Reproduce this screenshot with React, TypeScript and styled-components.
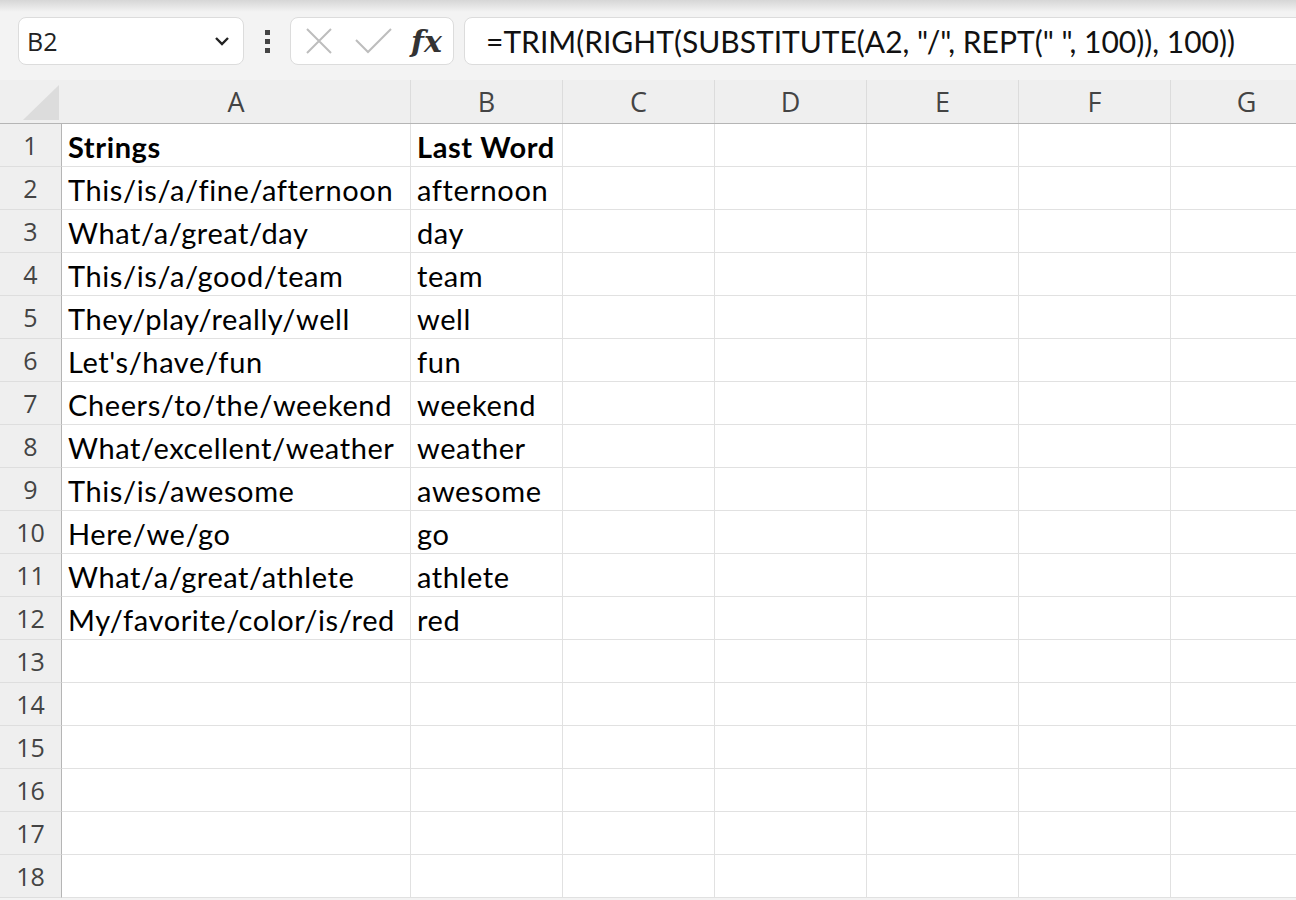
import styled, { createGlobalStyle } from 'styled-components'

const GlobalStyle = createGlobalStyle`
  html, body {
    margin: 0;
    padding: 0;
    background: #f3f3f3;
    overflow: hidden;
  }
`

const columns = [
  { name: 'A', width: 349 },
  { name: 'B', width: 152 },
  { name: 'C', width: 152 },
  { name: 'D', width: 152 },
  { name: 'E', width: 152 },
  { name: 'F', width: 152 },
  { name: 'G', width: 152 },
]

const rows: [string, string][] = [
  ['Strings', 'Last Word'],
  ['This/is/a/fine/afternoon', 'afternoon'],
  ['What/a/great/day', 'day'],
  ['This/is/a/good/team', 'team'],
  ['They/play/really/well', 'well'],
  ["Let's/have/fun", 'fun'],
  ['Cheers/to/the/weekend', 'weekend'],
  ['What/excellent/weather', 'weather'],
  ['This/is/awesome', 'awesome'],
  ['Here/we/go', 'go'],
  ['What/a/great/athlete', 'athlete'],
  ['My/favorite/color/is/red', 'red'],
  ['', ''],
  ['', ''],
  ['', ''],
  ['', ''],
  ['', ''],
  ['', ''],
]

export default function App() {
  return (
    <>
      <GlobalStyle />
      <Window>
        <FormulaBar>
          <NameBox>
            <span>B2</span>
            <svg width="16" height="10" viewBox="0 0 16 10">
              <path d="M2 2 L8 8 L14 2" fill="none" stroke="#222" strokeWidth="2.4" />
            </svg>
          </NameBox>
          <Grip>
            <i />
            <i />
            <i />
          </Grip>
          <ActionBox>
            <svg width="28" height="28" viewBox="0 0 28 28">
              <path d="M2 2 L26 26 M26 2 L2 26" stroke="#bdbdbd" strokeWidth="2" />
            </svg>
            <svg width="38" height="26" viewBox="0 0 38 26">
              <path d="M1 12 L13 24 L36 1" fill="none" stroke="#bdbdbd" strokeWidth="2" />
            </svg>
            <Fx>fx</Fx>
          </ActionBox>
          <FormulaInput>=TRIM(RIGHT(SUBSTITUTE(A2, "/", REPT(" ", 100)), 100))</FormulaInput>
        </FormulaBar>

        <Sheet>
          <HeaderRow>
            <Corner>
              <svg width="36" height="35" viewBox="0 0 36 35">
                <path d="M36 0 L36 35 L0 35 Z" fill="#dcdcdc" />
              </svg>
            </Corner>
            {columns.map((col) => (
              <ColHeader key={col.name} $width={col.width}>
                {col.name}
              </ColHeader>
            ))}
          </HeaderRow>
          {rows.map(([a, b], i) => (
            <Row key={i}>
              <RowHeader>{i + 1}</RowHeader>
              {columns.map((col, c) => (
                <Cell key={col.name} $width={col.width} $bold={i === 0}>
                  {c === 0 ? a : c === 1 ? b : ''}
                </Cell>
              ))}
            </Row>
          ))}
        </Sheet>
      </Window>
    </>
  )
}

const Window = styled.div`
  width: 1296px;
  height: 900px;
  overflow: hidden;
  background: #f3f3f3;
  position: relative;

  &::before {
    content: '';
    position: absolute;
    left: 0;
    right: 0;
    top: 0;
    height: 12px;
    background: linear-gradient(#d6d6d6, rgba(243, 243, 243, 0));
  }
`

const FormulaBar = styled.div`
  display: flex;
  align-items: center;
  height: 80px;
  padding: 17px 0 15px 18px;
  box-sizing: border-box;
`

const Box = styled.div`
  height: 48px;
  box-sizing: border-box;
  background: #fff;
  border: 1px solid #dcdcdc;
  border-radius: 8px;
  display: flex;
  align-items: center;
`

const NameBox = styled(Box)`
  width: 226px;
  padding: 0 13px 0 8px;
  justify-content: space-between;
  font-family: 'Open Sans', 'Noto Sans', sans-serif;
  font-size: 25px;
  color: #222;
`

const Grip = styled.div`
  width: 46px;
  display: flex;
  flex-direction: column;
  align-items: center;
  gap: 4px;

  i {
    display: block;
    width: 5px;
    height: 5px;
    background: #444;
  }
`

const ActionBox = styled(Box)`
  width: 164px;
  padding: 0 10px 0 14px;
  gap: 22px;
`

const Fx = styled.span`
  font-family: 'DejaVu Serif', 'Liberation Serif', serif;
  font-style: italic;
  font-weight: bold;
  font-size: 30px;
  color: #333;
  margin-left: -4px;
`

const FormulaInput = styled(Box)`
  flex: 1;
  margin-left: 10px;
  margin-right: -20px;
  padding-left: 21px;
  font-family: Lato, 'Open Sans', sans-serif;
  font-size: 30px;
  color: #111;
  white-space: nowrap;
`

const Sheet = styled.div`
  display: flex;
  flex-direction: column;
`

const HeaderRow = styled.div`
  display: flex;
  height: 44px;
  border-bottom: 1px solid #b5b5b5;
  box-sizing: border-box;
  background: #efefef;
`

const Corner = styled.div`
  width: 62px;
  flex: none;
  display: flex;
  align-items: flex-end;
  justify-content: flex-end;
  padding: 0 3px 3px 0;
  box-sizing: border-box;
`

const ColHeader = styled.div<{ $width: number }>`
  width: ${(p) => p.$width}px;
  flex: none;
  box-sizing: border-box;
  border-right: 1px solid #dcdcdc;
  display: flex;
  align-items: center;
  justify-content: center;
  font-family: 'Open Sans', 'Noto Sans', sans-serif;
  font-size: 27px;
  color: #444;
`

const Row = styled.div`
  display: flex;
  height: 43px;
`

const RowHeader = styled.div`
  width: 62px;
  flex: none;
  box-sizing: border-box;
  background: #efefef;
  border-right: 1px solid #b5b5b5;
  border-bottom: 1px solid #dedede;
  display: flex;
  align-items: center;
  justify-content: center;
  font-family: 'Open Sans', 'Noto Sans', sans-serif;
  font-size: 25px;
  color: #444;
`

const Cell = styled.div<{ $width: number; $bold: boolean }>`
  width: ${(p) => p.$width}px;
  flex: none;
  box-sizing: border-box;
  background: #fff;
  border-right: 1px solid #e1e1e1;
  border-bottom: 1px solid #e1e1e1;
  display: flex;
  align-items: center;
  padding: 2px 0 0 6px;
  font-family: Lato, 'Open Sans', sans-serif;
  font-size: 29px;
  letter-spacing: 0.6px;
  font-weight: ${(p) => (p.$bold ? 700 : 400)};
  color: #000;
  white-space: nowrap;
  overflow: hidden;
`
